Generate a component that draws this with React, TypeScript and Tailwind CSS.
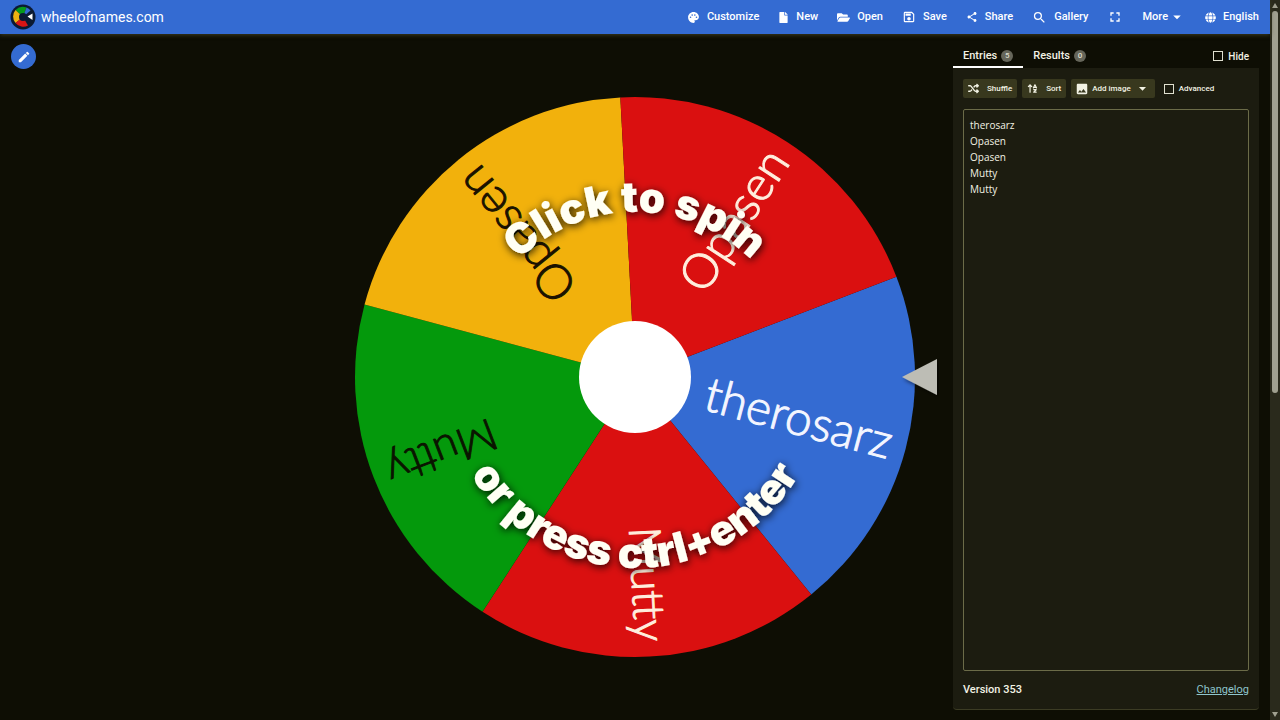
import React from "react";
import { FaFile, FaFolderOpen, FaGlobe } from "react-icons/fa";
import { FaShuffle, FaArrowUpAZ } from "react-icons/fa6";
import {
  MdPalette,
  MdOutlineSave,
  MdShare,
  MdSearch,
  MdFullscreen,
  MdImage,
  MdEdit,
  MdArrowDropDown,
} from "react-icons/md";

const CX = 290;
const CY = 290;
const RADIUS = 280;

const slices = [
  { name: "therosarz", angle: 15, fill: "#346bd2", text: "#f4f6ff", size: 48 },
  { name: "Mutty", angle: 87, fill: "#da1010", text: "#ffeedd", size: 44 },
  { name: "Mutty", angle: 159, fill: "#04990c", text: "#0a1400", size: 44 },
  { name: "Opasen", angle: 231, fill: "#f2b10c", text: "#1a1200", size: 48 },
  { name: "Opasen", angle: 303, fill: "#da1010", text: "#ffeedd", size: 48 },
];

const entries = ["therosarz", "Opasen", "Opasen", "Mutty", "Mutty"];

const point = (deg: number, r: number) => {
  const rad = (deg * Math.PI) / 180;
  return `${CX + r * Math.cos(rad)} ${CY + r * Math.sin(rad)}`;
};

const slicePath = (angle: number) =>
  `M${CX} ${CY} L${point(angle - 36, RADIUS)} A${RADIUS} ${RADIUS} 0 0 1 ${point(angle + 36, RADIUS)} Z`;

function Logo() {
  return (
    <svg viewBox="0 0 26 26" className="w-[26px] h-[26px]" aria-hidden="true">
      <circle cx="13" cy="13" r="12.500" fill="#0b1a33" />
      <path d="M13 13 L5.500 6 A10 10 0 0 1 16.500 3.500 Z" fill="#079a1c" />
      <path d="M13 13 L5.500 19 A10 10 0 0 1 5.500 6 Z" fill="#eeb211" />
      <path d="M13 13 L18 21.500 A10 10 0 0 1 5.500 19 Z" fill="#d91515" />
      <path d="M13 13 L16.500 3.500 A10 10 0 0 1 20.500 6.500 Z" fill="#346bd2" />
      <circle cx="13" cy="13" r="4" fill="#0b1a33" />
      <path d="M17.500 12.500 L22.500 9.500 V16 Z" fill="#ffffff" />
    </svg>
  );
}

function Wheel() {
  return (
    <svg viewBox="0 0 594 580" className="w-[594px] h-[580px] shrink-0" role="img" aria-label="Click to spin">
      <defs>
        <path id="arc-top" d="M125 290 A165 165 0 0 1 455 290" />
        <path id="arc-bottom" d="M99 290 A191 191 0 0 0 481 290" />
        <filter id="text-shadow" x="-20%" y="-20%" width="140%" height="140%">
          <feDropShadow dx="1" dy="2" stdDeviation="4" floodColor="#000" floodOpacity="0.9" />
        </filter>
        <filter id="pointer-shadow" x="-50%" y="-50%" width="200%" height="200%">
          <feDropShadow dx="2" dy="2" stdDeviation="2" floodColor="#000" floodOpacity="0.6" />
        </filter>
      </defs>
      <g>
        {slices.map((s, i) => (
          <path key={i} d={slicePath(s.angle)} fill={s.fill} />
        ))}
        {slices.map((s, i) => (
          <text
            key={i}
            transform={`rotate(${s.angle} ${CX} ${CY})`}
            x={CX + 265}
            y={CY + 14}
            textAnchor="end"
            fill={s.text}
            stroke={s.text}
            strokeWidth="1"
            fontSize={s.size}
            className="font-['Lato',sans-serif] font-light"
          >
            {s.name}
          </text>
        ))}
        <circle cx={CX} cy={CY} r="56" fill="#ffffff" />
      </g>
      <g fill="#fffff4" filter="url(#text-shadow)" className="font-['Inter',sans-serif] font-black text-[42px]">
        <text textAnchor="middle">
          <textPath href="#arc-top" startOffset="50%">Click to spin</textPath>
        </text>
        <text textAnchor="middle">
          <textPath href="#arc-bottom" startOffset="50%">or press ctrl+enter</textPath>
        </text>
      </g>
      <path d="M557 290 L592 272 V308 Z" fill="#bdbdb5" filter="url(#pointer-shadow)" />
    </svg>
  );
}

function NavButton({ icon, label }: { icon: React.ReactNode; label: string }) {
  return (
    <button className="flex items-center gap-[7px] text-[11px] font-medium">
      {icon}
      {label}
    </button>
  );
}

function Header() {
  return (
    <header className="z-10 flex h-[34px] shrink-0 items-center justify-between bg-[#346bd2] pl-2.5 pr-[11px] text-white shadow-[0_1px_4px_#3c3c20]">
      <a href="#" className="flex items-center gap-[5px] text-sm">
        <Logo />
        wheelofnames.com
      </a>
      <nav className="flex items-center gap-[19px]">
        <NavButton icon={<MdPalette className="size-[13px]" />} label="Customize" />
        <NavButton icon={<FaFile className="size-[11px]" />} label="New" />
        <NavButton icon={<FaFolderOpen className="size-[13px]" />} label="Open" />
        <NavButton icon={<MdOutlineSave className="size-[14px]" />} label="Save" />
        <NavButton icon={<MdShare className="size-[12px]" />} label="Share" />
        <NavButton icon={<MdSearch className="size-[15px]" />} label="Gallery" />
        <button aria-label="Fullscreen">
          <MdFullscreen className="size-[16px]" />
        </button>
        <button className="flex items-center text-[11px] font-medium">
          More
          <MdArrowDropDown className="size-[18px]" />
        </button>
        <NavButton icon={<FaGlobe className="size-[11px]" />} label="English" />
      </nav>
    </header>
  );
}

function Checkbox({ label, className }: { label: string; className: string }) {
  return (
    <label className={`flex items-center gap-[5px] font-medium ${className}`}>
      <input type="checkbox" className="size-[10px] appearance-none border border-[#e0e0d0]" />
      {label}
    </label>
  );
}

function Badge({ count }: { count: number }) {
  return (
    <span className="flex size-3 items-center justify-center rounded-full bg-[#66665a] text-[8px] text-[#ddddcc]">
      {count}
    </span>
  );
}

function SidePanel() {
  return (
    <aside className="mr-[11px] mb-2.5 flex w-[306px] shrink-0 flex-col rounded-sm border-b border-[#3c3c24] bg-[#1c1c10]">
      <div className="flex h-[34px] items-stretch bg-[#0e0e04] pr-2.5 text-[11px]">
        <button className="flex items-center gap-1 border-b-2 border-white px-2.5 pt-3 font-medium">
          Entries
          <Badge count={5} />
        </button>
        <button className="flex items-center gap-1 border-b-2 border-transparent px-2.5 pt-3 font-medium">
          Results
          <Badge count={0} />
        </button>
        <Checkbox label="Hide" className="ml-auto pt-2.5 text-[10px]" />
      </div>
      <div className="flex flex-1 flex-col px-2.5 pt-[11px]">
        <div className="flex h-[19px] items-center gap-[5px] text-[8px]">
          <button className="flex h-full items-center gap-2 rounded-xs bg-[#38381e] px-[5px] font-medium">
            <FaShuffle className="size-[11px]" />
            Shuffle
          </button>
          <button className="flex h-full items-center gap-2 rounded-xs bg-[#38381e] px-[5px] font-medium">
            <FaArrowUpAZ className="size-[11px]" />
            Sort
          </button>
          <button className="flex h-full items-center gap-[3px] rounded-xs bg-[#38381e] px-1 font-medium">
            <MdImage className="size-[14px]" />
            Add image
            <MdArrowDropDown className="size-[17px]" />
          </button>
          <Checkbox label="Advanced" className="ml-1" />
        </div>
        <textarea
          aria-label="Entries"
          defaultValue={entries.join("\n")}
          className="mt-[11px] flex-1 resize-none rounded-xs border border-[#6b6b48] px-1.5 py-[7px] font-['Open_Sans',sans-serif] text-[10px] leading-4 outline-none"
        />
        <div className="flex h-[38px] items-center justify-between text-[11px] font-medium">
          <span>Version 353</span>
          <a href="#" className="font-normal text-[#8ec5cc] underline">
            Changelog
          </a>
        </div>
      </div>
    </aside>
  );
}

function Scrollbar() {
  return (
    <div className="flex w-2.5 shrink-0 flex-col items-center bg-[#2a2a1c]" aria-hidden="true">
      <div className="my-[3px] border-x-[3px] border-b-[5px] border-x-transparent border-b-[#a0a090]" />
      <div className="h-[53%] w-1.5 rounded-full bg-[#a0a090]" />
      <div className="mt-auto mb-[3px] border-x-[3px] border-t-[5px] border-x-transparent border-t-[#a0a090]" />
    </div>
  );
}

export default function App() {
  return (
    <div className="flex h-screen overflow-hidden bg-[#0e0e04] font-['Roboto',sans-serif] text-[#f2f2e4]">
      <div className="flex min-w-0 flex-1 flex-col">
        <Header />
        <div className="flex min-h-0 flex-1">
          <main className="relative flex flex-1 items-center justify-end pr-3.5">
            <button
              aria-label="Edit title"
              className="absolute top-2.5 left-[11px] flex size-[25px] items-center justify-center rounded-full bg-[#346bd2] text-white"
            >
              <MdEdit className="size-[14px]" />
            </button>
            <Wheel />
          </main>
          <SidePanel />
        </div>
      </div>
      <Scrollbar />
    </div>
  );
}
